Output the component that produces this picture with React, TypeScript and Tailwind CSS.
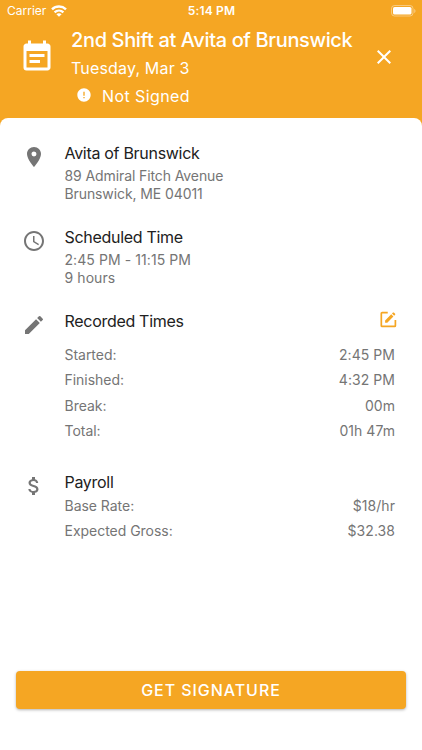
import React from "react";
import { MdAccessTime, MdAttachMoney, MdClose, MdEdit, MdError, MdEventNote, MdPlace } from "react-icons/md";

const times = [
  { label: "Started:", value: "2:45 PM" },
  { label: "Finished:", value: "4:32 PM" },
  { label: "Break:", value: "00m" },
  { label: "Total:", value: "01h 47m" },
];

const payroll = [
  { label: "Base Rate:", value: "$18/hr" },
  { label: "Expected Gross:", value: "$32.38" },
];

function StatusBar() {
  return (
    <div className="grid h-[22px] grid-cols-3 items-center pl-[7px] pr-[6px] text-[12px] leading-[22px]">
      <div className="flex items-center gap-[5px]">
        <span>Carrier</span>
        <svg width="16" height="12" viewBox="0 0 16 12" fill="none" stroke="currentColor" strokeWidth="2.4">
          <path d="M1 4.3 C4.9 .6 11.1 .6 15 4.3" />
          <path d="M3.6 7.3 C6.1 5 9.9 5 12.4 7.3" />
          <path d="M8 11.7 5.4 9.3 C6.9 8 9.1 8 10.6 9.3Z" fill="currentColor" stroke="none" />
        </svg>
      </div>
      <span className="text-center font-semibold tracking-[0.2px]">5:14 PM</span>
      <svg className="justify-self-end" width="25" height="12" viewBox="0 0 25 12">
        <rect x=".5" y=".5" width="21.5" height="10.5" rx="3" fill="none" stroke="white" strokeOpacity=".4" />
        <rect x="2" y="2" width="18.5" height="7.5" rx="1.6" fill="white" />
        <path d="M23.2 4v4c.8-.4 1.3-1.1 1.3-2s-.5-1.6-1.3-2z" fill="white" fillOpacity=".4" />
      </svg>
    </div>
  );
}

function Section({ icon, title, action, children }: { icon: React.ReactNode; title: string; action?: React.ReactNode; children: React.ReactNode }) {
  return (
    <section className="flex pl-[22px] pr-[27px]">
      <div className="w-[42.5px] shrink-0 pt-[4px] text-[#757575]">{icon}</div>
      <div className="min-w-0 flex-1">
        <div className="flex h-6 items-center justify-between">
          <h2 className="text-[16px] leading-6 tracking-[-0.3px] text-[#212121]">{title}</h2>
          {action}
        </div>
        {children}
      </div>
    </section>
  );
}

function Rows({ items }: { items: { label: string; value: string }[] }) {
  return (
    <dl>
      {items.map((item) => (
        <div key={item.label} className="flex h-[25.5px] items-center justify-between">
          <dt className="tracking-[-0.03px]">{item.label}</dt>
          <dd className="tracking-[0.05px]">{item.value}</dd>
        </div>
      ))}
    </dl>
  );
}

function EditButton() {
  return (
    <button aria-label="Edit recorded times" className="-mr-[2px] -mt-[4px] text-[#f5a623]">
      <svg width="17" height="17" viewBox="0 0 18 18" fill="none" stroke="currentColor" strokeWidth="1.8">
        <path d="M8.2 1.8H2.2a.8.8 0 0 0-.8.8v12.9c0 .5.3.8.8.8h13.3c.5 0 .8-.3.8-.8V9.6" />
        <path d="M5.4 12.4V10l6.5-6.5 2.3 2.3-6.5 6.6zM12.7 2.7l1-1c.3-.3.7-.3 1 0L16 3c.3.3.3.7 0 1l-1 1z" fill="currentColor" stroke="none" />
      </svg>
    </button>
  );
}

export default function App() {
  return (
    <div className="flex h-[750px] w-[422px] flex-col bg-[#f5a623] font-['Inter',sans-serif] text-white">
      <StatusBar />
      <header className="flex h-24 pl-[19px] pr-[26px]">
        <MdEventNote className="mt-[17px] size-[36px] shrink-0" />
        <div className="ml-[16px] flex-1 whitespace-nowrap">
          <h1 className="pt-[4px] text-[20px] leading-[28px] font-[450] tracking-[-0.36px]">2nd Shift at Avita of Brunswick</h1>
          <p className="text-[16px] leading-[28px] tracking-[0.17px]">Tuesday, Mar 3</p>
          <div className="flex h-[28px] items-center pl-[5px] text-[16px] tracking-[0.4px]">
            <MdError className="mb-[3px] size-4" />
            <span className="ml-[10px]">Not Signed</span>
          </div>
        </div>
        <button aria-label="Close" className="h-[70px]">
          <MdClose className="size-6" />
        </button>
      </header>
      <main className="flex flex-1 flex-col rounded-t-[8px] bg-white pt-[23px] text-[14px] leading-[17.5px] tracking-[-0.1px] text-[#757575]">
        <Section icon={<MdPlace className="size-6" />} title="Avita of Brunswick">
          <div className="pt-[2px]">
            <p>89 Admiral Fitch Avenue</p>
            <p>Brunswick, ME 04011</p>
          </div>
        </Section>
        <div className="h-[23px]" />
        <Section icon={<MdAccessTime className="size-6" />} title="Scheduled Time">
          <div className="pt-[2px] tracking-[0.08px]">
            <p>2:45 PM - 11:15 PM</p>
            <p>9 hours</p>
          </div>
        </Section>
        <div className="h-[23px]" />
        <Section icon={<MdEdit className="size-6" />} title="Recorded Times" action={<EditButton />}>
          <div className="pt-[8.5px]">
            <Rows items={times} />
          </div>
        </Section>
        <div className="h-[26px]" />
        <Section icon={<MdAttachMoney className="size-6" />} title="Payroll">
          <div className="-mt-px">
            <Rows items={payroll} />
          </div>
        </Section>
        <button className="mx-4 mb-[41px] mt-auto h-[38px] rounded-[4px] bg-[#f5a623] pt-px text-[16px] font-medium tracking-[0.95px] text-white shadow-[0_1px_3px_rgba(0,0,0,0.3)]">
          GET SIGNATURE
        </button>
      </main>
    </div>
  );
}
